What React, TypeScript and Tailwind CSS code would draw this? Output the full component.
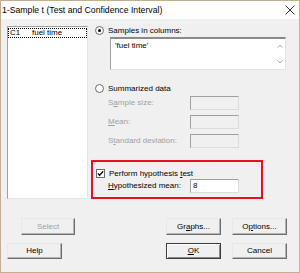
import type { ReactNode } from 'react'

function Radio({ checked }: { checked?: boolean }) {
  return (
    <span className="w-[9px] h-[9px] rounded-full border border-[#6d6d6d] bg-white flex items-center justify-center shrink-0">
      {checked && <span className="w-[3px] h-[3px] rounded-full bg-black" />}
    </span>
  )
}

function Check() {
  return (
    <span className="w-[9px] h-[9px] border border-[#6d6d6d] bg-white flex items-center justify-center shrink-0">
      <svg width="7" height="7" viewBox="0 0 7 7">
        <path d="M0.8 3.4 L2.6 5.3 L6.2 1.3" fill="none" stroke="#000" strokeWidth="1.3" />
      </svg>
    </span>
  )
}

function Field({ value, disabled }: { value?: string; disabled?: boolean }) {
  return (
    <div
      className={`w-[49px] h-[14px] border border-t-[#a0a0a0] border-l-[#a0a0a0] border-r-[#dcdcdc] border-b-[#dcdcdc] flex items-center pl-[2px] ${
        disabled ? 'bg-[#f0f0f0]' : 'bg-white'
      }`}
    >
      {value}
    </div>
  )
}

function Btn({
  children,
  w = 'w-[55px]',
  disabled,
  isDefault,
  className = ''
}: {
  children: ReactNode
  w?: string
  disabled?: boolean
  isDefault?: boolean
  className?: string
}) {
  return (
    <div
      className={`${w} h-full flex items-center justify-center bg-[#f0f0f0] ${
        isDefault
          ? 'border border-[#3c3c3c] shadow-[inset_1px_1px_0_#ffffff,inset_-1px_-1px_0_#8a8a8a]'
          : 'border border-t-[#e8e8e8] border-l-[#e8e8e8] border-r-[#6d6d6d] border-b-[#6d6d6d] shadow-[inset_-1px_-1px_0_#b4b4b4]'
      } ${disabled ? 'text-[#a0a0a0]' : 'text-black'} ${className}`}
    >
      {children}
    </div>
  )
}

export default function App() {
  return (
    <div className="w-[300px] h-[273px] border border-[#c2b08a] bg-[#f0f0f0] flex flex-col font-['Liberation_Sans',Arial,sans-serif] text-[8px] leading-none text-black">
      <div className="h-[18px] bg-white flex items-center justify-between pl-[1px] pr-[4px] shrink-0">
        <span className="text-[8.7px]">1-Sample t (Test and Confidence Interval)</span>
        <svg width="10" height="10" viewBox="0 0 10 10">
          <path d="M0.5 0.5 L9.5 9.5 M9.5 0.5 L0.5 9.5" stroke="#333" strokeWidth="1" />
        </svg>
      </div>

      <div className="flex-1 flex flex-col pl-[6px] pt-[7px]">
        <div className="flex h-[173px]">
          <div className="w-[81px] h-full bg-white border border-t-[#a0a0a0] border-l-[#a0a0a0] border-r-[#e3e3e3] border-b-[#e3e3e3] pt-[1px]">
            <div className="h-[10px] border border-dotted border-black flex items-center pl-[1px]">
              <span className="w-[22px]">C1</span>
              <span>fuel time</span>
            </div>
          </div>

          <div className="w-[197px] ml-[3px] flex flex-col">
            <div className="h-[9px] flex items-center ml-[4px] gap-[4px]">
              <Radio checked />
              <span>Samples in columns:</span>
            </div>
            <div className="ml-[19px] mt-[2px] w-[176px] h-[35px] bg-white border border-[#a0a0a0] border-t-2 border-t-[#8a8a8a] border-b-[#e3e3e3] border-r-[#e3e3e3] flex">
              <div className="flex-1 pl-[4px] pt-[3px]">'fuel time'</div>
              <div className="w-[11px] flex flex-col justify-between items-center py-[5px]">
                <svg width="6" height="4" viewBox="0 0 6 4">
                  <path d="M0.5 3.5 L3 1 L5.5 3.5" fill="none" stroke="#b0b0b0" strokeWidth="1" />
                </svg>
                <svg width="6" height="4" viewBox="0 0 6 4">
                  <path d="M0.5 0.5 L3 3 L5.5 0.5" fill="none" stroke="#b0b0b0" strokeWidth="1" />
                </svg>
              </div>
            </div>

            <div className="h-[9px] mt-[14px] flex items-center ml-[4px] gap-[4px]">
              <Radio />
              <span>Summarized data</span>
            </div>
            <div className="mt-[3px] ml-[17px] flex flex-col gap-[5px] text-[#a0a0a0]">
              <div className="flex items-center h-[14px]">
                <span className="w-[82px]">
                  S<u>a</u>mple size:
                </span>
                <Field disabled />
              </div>
              <div className="flex items-center h-[14px]">
                <span className="w-[82px]">
                  <u>M</u>ean:
                </span>
                <Field disabled />
              </div>
              <div className="flex items-center h-[14px]">
                <span className="w-[82px]">
                  S<u>t</u>andard deviation:
                </span>
                <Field disabled />
              </div>
            </div>

            <div className="mt-[12px] w-[172px] h-[40px] border-2 border-[#e81123] flex flex-col pt-[7px]">
              <div className="h-[9px] flex items-center ml-[3px] gap-[4px]">
                <Check />
                <span>
                  Perform hypothesis <u>t</u>est
                </span>
              </div>
              <div className="mt-[1px] ml-[15px] flex items-center h-[14px]">
                <span className="w-[82px]">
                  <u>H</u>ypothesized mean:
                </span>
                <Field value="8" />
              </div>
            </div>
          </div>
        </div>

        <div className="flex h-[17px] mt-[19px]">
          <Btn w="w-[54px]" disabled className="ml-[14px]">
            Select
          </Btn>
          <Btn className="ml-[91px]">
            Gr<u>a</u>phs...
          </Btn>
          <Btn className="ml-[11px]">
            O<u>p</u>tions...
          </Btn>
        </div>
        <div className="flex h-[16px] mt-[8px]">
          <Btn>Help</Btn>
          <Btn isDefault className="ml-[104px]">
            <u>O</u>K
          </Btn>
          <Btn className="ml-[11px]">Cancel</Btn>
        </div>
      </div>
    </div>
  )
}
